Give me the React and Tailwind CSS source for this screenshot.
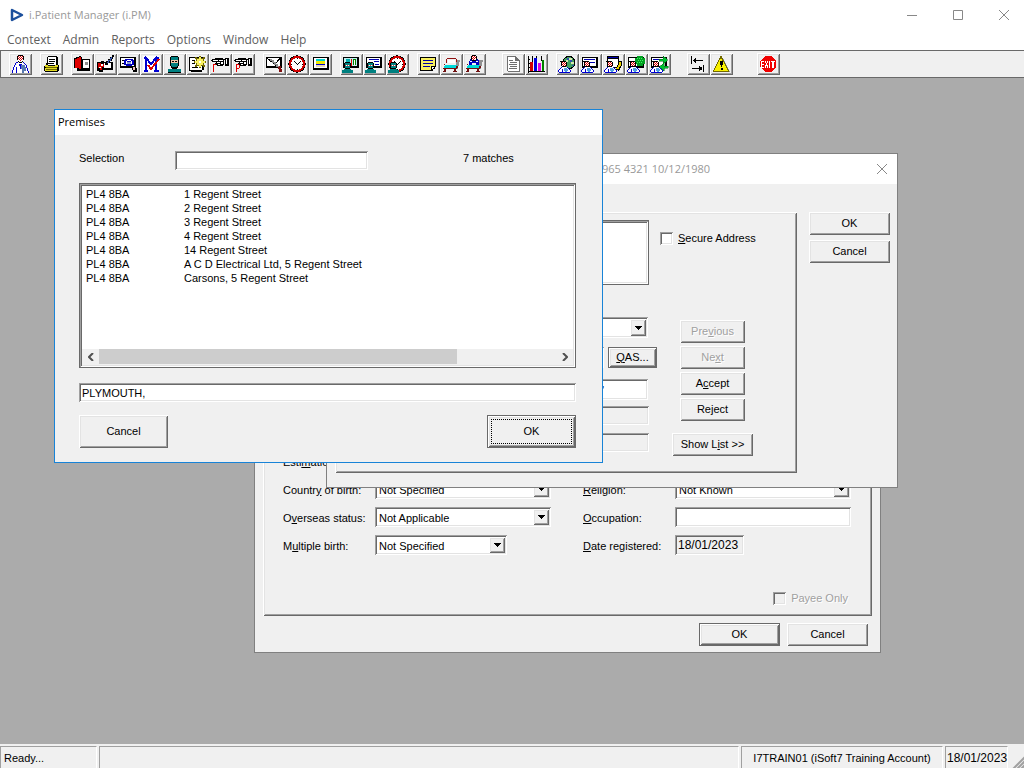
import React from 'react';
import clsx from 'clsx';

const RAISED = 'bg-[#f0f0f0] shadow-[inset_1px_1px_0_#fff,inset_-1px_-1px_0_#696969,inset_2px_2px_0_#e3e3e3,inset_-2px_-2px_0_#a0a0a0]';
const SUNKEN = 'shadow-[inset_1px_1px_0_#a0a0a0,inset_-1px_-1px_0_#fff,inset_2px_2px_0_#696969,inset_-2px_-2px_0_#e3e3e3]';
const UI_FONT = "font-['Liberation_Sans',Arial,sans-serif] text-[11px] leading-[14px]";
const TITLE_FONT = "font-['Open_Sans','Noto_Sans',sans-serif] text-[11px]";

const Nurse = () => (
  <>
    <path fill="#fff" d="M1 17v-2l3-3h5l3 3v2z" />
    <path fill="#0000d0" d="M0 15h1v2H0zM1 14h1v1H1zM2 13h1v1H2zM3 12h1v1H3zM9 12h1v1H9zM10 13h1v1h-1zM11 14h1v1h-1zM12 15h1v2h-1zM1 17h11v1H1zM4 14h1v3H4z" />
    <path fill="#50a0e0" d="M6 13h3v1h1v2H9v1H7v-1H6z" />
    <path fill="#000" d="M3 6h5v1h1v4H8v1H4v-1H3V7H2V6z" />
    <path fill="#fff" d="M4 7h4v4H4z" />
    <path fill="#e00000" d="M4 7h1v1H4zM6 7h1v1H6zM5 8h1v1H5zM7 8h1v1H7zM4 9h1v1H4zM6 9h1v1H6zM5 10h1v1H5zM7 10h1v1H7z" />
  </>
);

const Teal = () => (
  <>
    <path fill="#000" d="M3 7h5v1h1v5H8v1H3v-1H2V8h1z" />
    <path fill="#008080" d="M3 8h5v2H3zM3 11h5v2H3zM0 15h2v-1h7v1h2v3H0z" />
    <path fill="#c04040" d="M3 10h5v1H3z" />
    <path fill="#fff" d="M4 10h1v1H4zM6 10h1v1H6z" />
  </>
);

const Hand = () => (
  <>
    <path fill="#fff" d="M2 4h11v6H5V7H2z" />
    <path fill="#000" d="M4 3h8v1h2v1h-1v5h-1v1H6v-1H5V9H4V8h1V7H1V6H0V5h1V4h3zM14 3h4v8h-4z" />
    <path fill="#fff" d="M2 5h5v1H2zM8 5h4v1H8zM6 7h3v1H6zM10 7h2v2h-2zM7 9h2v1H7zM15 4h1v5h-1z" />
    <path fill="#e00000" d="M2 9h3v1H2zM2 10h1v7H2z" />
  </>
);

const Clock = () => (
  <>
    <circle cx="9" cy="9" r="7.500" fill="#fff" stroke="#000" strokeWidth="2.500" />
    <circle cx="9" cy="9" r="7" fill="none" stroke="#d00000" strokeWidth="2" />
    <path fill="#000" d="M9 3h1v1H9zM9 14h1v1H9zM3 9h1v1H3zM14 9h1v1h-1zM6 6h1v1H6zM7 7h1v1H7zM8 8h1v1H8zM9 9h1v1H9zM10 8h1v1h-1zM11 7h1v1h-1zM12 6h1v1h-1z" />
  </>
);

const Card = ({ fill = '#fff' }) => (
  <>
    <path fill="#000" d="M1 2h16v11H1z" />
    <path fill={fill} d="M2 3h13v8H2z" />
  </>
);

const Bed = () => (
  <>
    <path fill="#909090" d="M14 5h4v2h-1v4h-1v3h-2z" />
    <path fill="#00d8d8" d="M3 10h12v1h-1v2H2v-2h1z" />
    <path fill="#701010" d="M2 9h1v1H2zM1 13h14v1H1zM2 14h2v2H2zM12 14h2v2h-2zM14 11h2v2h-2zM1 16h3v1H1zM11 16h4v1h-4z" />
  </>
);

const ICONS = {
  Patient: (
    <>
      <path fill="#fff" d="M2 10h4V8h6v2h3l2 4v4H2z" />
      <path fill="#0000d0" d="M5 7h2v1H5zM4 8h1v2H4zM3 10h1v2H3zM2 12h1v3H2zM1 15h1v3H1zM5 12h1v6H5zM12 7h1v1h-1zM13 8h1v1h-1zM14 9h1v1h-1zM15 10h1v3h-1zM16 13h1v3h-1zM17 16h1v2h-1zM8 9h3v2H8zM9 11h2v3H9z" />
      <path fill="#5878b0" d="M10 10h4v2h1v4h-2v2h-2v-4h-1z" />
      <path fill="#000" d="M7 0h5v1H7zM6 1h1v4H6zM12 1h1v4h-1zM7 6h1v1H7zM11 6h1v1h-1zM8 7h3v1H8z" />
      <path fill="#fff" d="M7 1h5v5H7z" />
      <path fill="#d00000" d="M7 1h1v1H7zM9 1h1v1H9zM11 1h1v1h-1zM8 2h1v1H8zM10 2h1v1h-1zM7 3h1v1H7zM9 3h1v1H9zM11 3h1v1h-1zM8 4h1v1H8zM10 4h1v1h-1zM9 5h1v1H9z" />
    </>
  ),
  Open: (
    <>
      <path fill="#000" d="M6 1h9v1h1v8h1v6h-1v1H3v-1H2v-5h2V8h1V2h1z" />
      <path fill="#fff" d="M6 2h8v8H6z" />
      <path fill="#000" d="M7 4h6v1H7zM7 6h6v1H7zM6 8h6v1H6z" />
      <path fill="#e0d820" d="M3 10h3v1h7v-1h3v2h-1v4H3v-3h1v-1H3z" />
      <path fill="#706800" d="M4 12h11v1H4zM4 14h11v1H4z" />
    </>
  ),
  Register: (
    <>
      <path fill="#000" d="M9 4h8v12H4v-2h5z" />
      <path fill="#fff" d="M10 5h6v8h-6z" />
      <path fill="#909090" d="M12 7h3v3h-3z" />
      <path fill="#000" d="M1 3h2V2h3V1h2v1h1v13H7v-1H4v-1H1z" />
      <path fill="#e00000" d="M2 4h2V3h2V2h2v12H6v-1H2z" />
    </>
  ),
  'Edit record': (
    <>
      <path fill="#000" d="M1 7h4V6h3v1h9v8H7v2H3v-1H1z" />
      <path fill="#fff" d="M8 8h7v5H8z" />
      <path fill="#d00000" d="M2 8h3v1h3v3H6v3H4v-2H2z" />
      <path fill="#fff" d="M5 9h2v2H5zM3 12h2v1H3z" />
      <path fill="#000" d="M16 0h2v2h-1v2h-1v2h-2v2h-2v2H9v-2h1V6h2V4h2V2h2z" />
      <path fill="#3858b0" d="M15 2h1v2h-1v2h-2v2h-2V7h1V5h2V3h1z" />
    </>
  ),
  'Find record': (
    <>
      <Card />
      <path fill="#000" d="M3 5h3v1H3zM3 8h3v1H3zM13 11h4v2h1v4h-4v-2h-1z" />
      <path fill="#0000c0" d="M6 4h8v1h1v5h-2v1H7v-1H5V5h1z" />
      <path fill="#fff" d="M8 5h4v1H8zM7 6h1v3H7zM12 6h1v3h-1z" />
      <path fill="#90a0d0" d="M8 7h4v2H8z" />
      <path fill="#f0c0c0" d="M14 12h2v3h-2z" />
    </>
  ),
  Merge: (
    <>
      <path fill="#fff" d="M1 1h16v16H1z" />
      <path fill="none" stroke="#0000d0" strokeWidth="2" d="M4 16V3l5 6 5-6v13" />
      <path fill="#0000d0" d="M2 2h3v2H2zM13 2h4v2h-4zM2 15h4v2H2zM12 15h5v2h-5z" />
      <path fill="none" stroke="#e00000" strokeWidth="2" d="M6 10l3 4 8-10" />
    </>
  ),
  Clinician: (
    <>
      <path fill="#000" d="M6 1h7v1h1v9h-1v2H6v-2H5V2h1z" />
      <path fill="#008080" d="M6 2h7v3H6zM6 8h7v3h-1v1H7v-1H6zM3 14h4v-1h5v1h4v4H3z" />
      <path fill="#f0c8a8" d="M6 5h7v3H6z" />
      <path fill="#000" d="M7 6h2v1H7zM10 6h2v1h-2zM3 17h13v1H3zM7 13h5v1H7z" />
    </>
  ),
  'New note': (
    <>
      <path fill="#000" d="M1 2h15v13h-2v2H3v-1H1z" />
      <path fill="#fff" d="M2 3h12v12H2z" />
      <path fill="#000" d="M4 5h3v1H4zM4 8h3v1H4zM4 12h6v1H4z" />
      <path fill="#706800" d="M11 1h2v2h2V2h2v2h-1v2h2v2h-2v2h1v2h-2v-1h-2v2h-2v-2H9v1H7v-2h1V8H6V6h2V4H7V2h2v1h2z" />
      <path fill="#f8f060" d="M9 4h6v6H9zM11 2h2v10h-2zM7 6h10v2H7z" />
      <path fill="#fff" d="M11 6h2v2h-2z" />
    </>
  ),
  'Refer in': <Hand />,
  'Refer out': (
    <>
      <Hand />
      <path fill="#e00000" d="M5 10h1v3H5zM3 13h2v1H3z" />
    </>
  ),
  'Waiting list': (
    <>
      <Card />
      <path fill="none" stroke="#000" d="M2 3l12 10M16 2l-5 6" />
      <path fill="#909090" d="M5 4h2v1h2v2h2v2h2v2h2v2h-2v-1h-2v-2H9V8H7V6H5z" />
      <path fill="#801010" d="M14 11h2v3h1v3h-3v-3h-1z" />
    </>
  ),
  Appointments: <Clock />,
  Schedule: (
    <>
      <path fill="#000" d="M2 2h16v13H2z" />
      <path fill="#fff" d="M3 3h13v10H3z" />
      <path fill="#00d0d0" d="M5 4h9v2H5z" />
      <path fill="#f0e800" d="M5 6h9v3H5z" />
      <path fill="#0000d0" d="M5 9h9v1H5z" />
      <path fill="#e8d8b0" d="M5 10h9v2H5z" />
    </>
  ),
  'Clinic screen': (
    <>
      <Card fill="#c0f0f0" />
      <path fill="#00b0b0" d="M4 4h4v3H4z" />
      <path fill="#e00000" d="M9 4h1v7H9z" />
      <path fill="#008000" d="M11 4h3v6h-3z" />
      <path fill="#fff" d="M12 5h1v5h-1z" />
      <Teal />
    </>
  ),
  'Clinic list': (
    <>
      <Card />
      <path fill="#0000b0" d="M4 4h10v1H4zM9 6h5v1H9zM10 9h4v1h-4z" />
      <Teal />
    </>
  ),
  'Clinic clock': (
    <>
      <Clock />
      <Teal />
    </>
  ),
  Notes: (
    <>
      <path fill="#000" d="M1 2h16v10h-1v2h-2v2H1z" />
      <path fill="#f8f060" d="M2 3h14v8h-4v4H2z" />
      <path fill="#0000a0" d="M4 5h10v1H4zM4 8h10v1H4zM4 11h7v1H4z" />
      <path fill="#fff" d="M13 12h2v1h-1v1h-1z" />
    </>
  ),
  Bed: (
    <>
      <Bed />
      <path fill="#901010" d="M5 3h9v1h1v3h-1V4H5v4H4V4h1z" />
      <path fill="#fff" d="M6 5h7v3H6z" />
    </>
  ),
  'Bed transfer': (
    <>
      <Bed />
      <path fill="#0000c0" d="M5 4h8v1h1v5h-3V8H7v2H4V6h1z" />
      <path fill="#000" d="M7 0h4v1h1v4h-1v1H7V5H6V1h1z" />
      <path fill="#fff" d="M7 1h4v4H7zM5 6h2v1H5zM11 6h2v1h-2z" />
      <path fill="#e00000" d="M7 1h1v1H7zM9 1h1v1H9zM8 2h1v1H8zM10 2h1v1h-1zM7 3h1v1H7zM9 3h1v1H9zM8 4h1v1H8z" />
    </>
  ),
  Document: (
    <>
      <path fill="#707070" d="M3 1h9v1h1v1h1v1h1v1h1v12H4v-1H3z" />
      <path fill="#fff" d="M4 2h7v4h4v10H4z" />
      <path fill="#707070" d="M5 5h4v1H5zM6 7h7v1H6zM5 9h8v1H5zM6 11h7v1H6zM5 13h8v1H5zM12 3h1v2h-1z" />
    </>
  ),
  Chart: (
    <>
      <path fill="#000" d="M1 1h1v15h16v1H2v1H1zM5 1h1v15H5zM9 1h1v3H9zM14 1h1v5h-1zM2 4h1v1H2zM2 8h1v1H2zM2 12h1v1H2z" />
      <path fill="#d00000" d="M3 7h3v9H3z" />
      <path fill="#0000e0" d="M7 3h3v13H7z" />
      <path fill="#e000e0" d="M11 8h3v8h-3z" />
      <path fill="#008000" d="M15 5h2v11h-2z" />
    </>
  ),
  World: (
    <>
      <circle cx="11" cy="7.500" r="6" fill="#40a060" stroke="#000" />
      <path fill="#d8e8b0" d="M11 3h3v2h-3zM8 5h2v2H8zM13 7h3v2h-3z" />
      <path fill="#3050b0" d="M9 3h2v2H9zM12 5h2v2h-2zM14 10h2v1h-2z" />
      <Nurse />
    </>
  ),
  'Ward list': (
    <>
      <Card />
      <path fill="#0000b0" d="M3 4h11v1H3zM9 7h5v1H9z" />
      <Nurse />
    </>
  ),
  'Ward edit': (
    <>
      <path fill="#000" d="M3 1h12v12H3z" />
      <path fill="#fff" d="M4 4h10v8H4z" />
      <path fill="#0000b0" d="M4 2h10v1H4z" />
      <Nurse />
      <path fill="none" stroke="#000" strokeWidth="4" d="M16 6v4l-3 5" />
      <path fill="none" stroke="#e8d000" strokeWidth="2" d="M16 7v3l-3 4" />
    </>
  ),
  'Ward add': (
    <>
      <Card />
      <path fill="#00a020" d="M10 1h6v2h2v6h-2v2h-6V9H8V3h2z" />
      <path fill="#40f060" d="M10 3h1v1h-1zM12 3h1v1h-1zM14 3h1v1h-1zM11 5h1v1h-1zM13 5h1v1h-1zM15 5h1v1h-1zM10 7h1v1h-1zM12 7h1v1h-1zM14 7h1v1h-1z" />
      <Nurse />
    </>
  ),
  'Ward transfer': (
    <>
      <Card />
      <path fill="#0000b0" d="M3 4h6v1H3z" />
      <path fill="#00c030" stroke="#006010" strokeWidth=".5" d="M9 4h4V1l5 4-5 4V6H9zM18 13h-4v3l-5-4 5-4v3h4z" />
      <Nurse />
    </>
  ),
  Tab: (
    <path fill="#000" d="M2 1h1v8H2zM4 5h10v1H4zM5 4h2v3H5zM6 3h1v5H6zM14 10h1v7h-1zM3 13h9v1H3zM11 12h2v3h-2zM10 11h1v5h-1z" />
  ),
  Alert: (
    <>
      <path fill="#909090" d="M11 3l7 14H4z" />
      <path fill="#f8f000" stroke="#706800" d="M9 1.500L16.500 16H1.500z" />
      <path fill="#000" d="M8 6h3v4h-1v2H9v-2H8zM9 13h2v2H9z" />
    </>
  ),
  Exit: (
    <>
      <path fill="#f00000" d="M6 1h6l5 5v6l-5 5H6l-5-5V6z" />
      <path fill="#fff" d="M2 6h3v1H3v2h2v1H3v2h2v1H2zM6 6h1v2h1V6h1v2H8v2h1v3H8v-2H7v2H6v-3h1V8H6zM10 6h1v7h-1zM12 6h4v1h-1v6h-2V7h-1z" />
    </>
  ),
};

const TOOLBAR = [
  { names: ['Patient'], gap: 'ml-2' },
  { names: ['Open'], gap: 'ml-2' },
  { names: ['Register', 'Edit record', 'Find record', 'Merge', 'Clinician', 'New note', 'Refer in', 'Refer out'], gap: 'ml-2' },
  { names: ['Waiting list', 'Appointments', 'Schedule'], gap: 'ml-2' },
  { names: ['Clinic screen', 'Clinic list', 'Clinic clock'], gap: 'ml-2' },
  { names: ['Notes', 'Bed', 'Bed transfer'], gap: 'ml-2' },
  { names: ['Document', 'Chart'], gap: 'ml-4' },
  { names: ['World', 'Ward list', 'Ward edit', 'Ward add', 'Ward transfer'], gap: 'ml-2' },
  { names: ['Tab', 'Alert'], gap: 'ml-4' },
  { names: ['Exit'], gap: 'ml-6' },
];

const PREMISES = [
  ['PL4 8BA', '1 Regent Street'],
  ['PL4 8BA', '2 Regent Street'],
  ['PL4 8BA', '3 Regent Street'],
  ['PL4 8BA', '4 Regent Street'],
  ['PL4 8BA', '14 Regent Street'],
  ['PL4 8BA', 'A C D Electrical Ltd, 5 Regent Street'],
  ['PL4 8BA', 'Carsons, 5 Regent Street'],
];

// "&" marks the access key, as in the menus of the desktop toolkit
function Mnemonic({ text }) {
  const at = text.indexOf('&');
  if (at < 0) return text;
  return (
    <>
      {text.slice(0, at)}
      <u className="underline-offset-1">{text[at + 1]}</u>
      {text.slice(at + 2)}
    </>
  );
}

function Button({ text, isDefault, focused, disabled, className }) {
  return (
    <button
      type="button"
      disabled={disabled}
      className={clsx(
        'flex shrink-0',
        isDefault && 'bg-[#696969] p-px',
        disabled && 'text-[#a0a0a0] [text-shadow:1px_1px_0_#fff]',
        className
      )}
    >
      <span className={clsx('flex h-full w-full items-center justify-center p-[3px]', RAISED)}>
        <span className={clsx('flex items-center justify-center', focused && 'h-full w-full border border-dotted border-black')}>
          <span className="whitespace-nowrap pb-[2px]">
            <Mnemonic text={text} />
          </span>
        </span>
      </span>
    </button>
  );
}

function Combo({ id, value, label, className }) {
  return (
    <div className={clsx('relative', className)}>
      <select id={id} aria-label={label} className={clsx('h-full w-full appearance-none bg-white pl-1 pr-5 pt-px', SUNKEN)}>
        <option>{value}</option>
      </select>
      <span className={clsx('pointer-events-none absolute inset-y-[2px] right-[2px] flex w-4 items-center justify-center', RAISED)}>
        <svg width="7" height="4" viewBox="0 0 7 4" shapeRendering="crispEdges">
          <path d="M0 0h7v1H6v1H5v1H4v1H3V3H2V2H1V1H0z" />
        </svg>
      </span>
    </div>
  );
}

function Checkbox({ text, disabled, className }) {
  return (
    <label className={clsx('flex items-center gap-[5px]', disabled && 'text-[#a0a0a0] [text-shadow:1px_1px_0_#fff]', className)}>
      <input
        type="checkbox"
        disabled={disabled}
        className={clsx('h-[13px] w-[13px] appearance-none', disabled ? 'bg-[#f0f0f0]' : 'bg-white', SUNKEN)}
      />
      <span className="pb-px">
        <Mnemonic text={text} />
      </span>
    </label>
  );
}

function Field({ id, text, children }) {
  return (
    <div className="flex h-5 items-center">
      <label htmlFor={id} className="w-[92px] pt-[2px]">
        <Mnemonic text={text} />
      </label>
      {children}
    </div>
  );
}

function RegistrationWindow() {
  return (
    <section className="absolute left-[254px] top-[322px] w-[627px] border border-[#808080] bg-[#f0f0f0] pb-[6px]">
      <header className="h-[30px] bg-white" />
      <div className={clsx('mx-2 mt-2 px-5 pb-2 pt-3', RAISED)}>
        <div className="flex">
          <div className="flex w-[300px] flex-col gap-2">
            <Field id="estimation" text="Esti&mation:">
              <Combo id="estimation" value="" className="h-5 w-[176px]" />
            </Field>
            <Field id="country" text="Countr&y of birth:">
              <Combo id="country" value="Not Specified" className="h-5 w-[176px]" />
            </Field>
            <Field id="overseas" text="O&verseas status:">
              <Combo id="overseas" value="Not Applicable" className="h-5 w-[176px]" />
            </Field>
            <Field id="multiple" text="M&ultiple birth:">
              <Combo id="multiple" value="Not Specified" className="h-5 w-[132px]" />
            </Field>
          </div>
          <div className="flex flex-1 flex-col justify-end gap-2">
            <Field id="religion" text="&Religion:">
              <Combo id="religion" value="Not Known" className="h-5 w-[176px]" />
            </Field>
            <Field id="occupation" text="&Occupation:">
              <input id="occupation" className={clsx('h-5 w-[176px] bg-white px-1', SUNKEN)} />
            </Field>
            <Field id="registered" text="&Date registered:">
              <input id="registered" readOnly value="18/01/2023" className={clsx('h-5 w-[69px] px-[3px] text-xs', SUNKEN)} />
            </Field>
          </div>
        </div>
        <Checkbox text="Payee Only" disabled className="mt-[33px] h-5 justify-end pr-1" />
      </div>
      <footer className="mt-[7px] flex justify-end gap-[7px] pr-3">
        <Button text="OK" isDefault className="h-[23px] w-[81px]" />
        <Button text="Cancel" className="h-[23px] w-[81px]" />
      </footer>
    </section>
  );
}

function AddressWindow() {
  return (
    <section className="absolute left-[326px] top-[75px] w-[572px] border border-[#808080] bg-[#f0f0f0] pb-[14px]">
      <header className={clsx('flex h-[30px] items-center justify-between bg-white pl-[275px] pr-[9px] text-[#999]', TITLE_FONT)}>
        <h2>965 4321 10/12/1980</h2>
        <button type="button" aria-label="Close">
          <svg width="12" height="12" viewBox="0 0 12 12" fill="none" stroke="#888">
            <path d="M1 1l10 10M11 1L1 11" />
          </svg>
        </button>
      </header>
      <div className="flex items-start gap-3 pl-2 pr-[7px] pt-7">
        <div className={clsx('flex flex-1 pb-[17px] pl-2 pt-2', RAISED)}>
          <div className="flex w-[314px] flex-col">
            <textarea
              aria-label="Address"
              className={clsx('h-[65px] w-[306px] resize-none border border-[#696969] bg-white', SUNKEN)}
            />
            <Combo label="Address type" value="" className="mt-8 h-[21px] w-[305px]" />
            <div className="mt-[9px] flex h-[21px] gap-1">
              <input aria-label="Postcode" className={clsx('w-full bg-white', SUNKEN)} />
              <Button text="&QAS..." isDefault className="w-[49px]" />
            </div>
            <input aria-label="Street" defaultValue="'" className={clsx('mt-[11px] h-[21px] w-[305px] bg-white pl-[259px]', SUNKEN)} />
            <input aria-label="From" readOnly className={clsx('mt-[6px] h-[19px] w-[306px]', SUNKEN)} />
            <input aria-label="To" readOnly className={clsx('mt-2 h-[19px] w-[306px]', SUNKEN)} />
          </div>
          <div className="ml-[3px] flex w-[105px] flex-col items-center gap-[3px]">
            <Checkbox text="&Secure Address" className="mb-[72px] mt-3 h-[13px] self-start" />
            <Button text="Pre&vious" disabled className="h-[23px] w-[65px]" />
            <Button text="Ne&xt" disabled className="h-[23px] w-[65px]" />
            <Button text="A&ccept" className="h-[23px] w-[65px]" />
            <Button text="Re&ject" className="h-[23px] w-[65px]" />
            <Button text="Show L&ist >>" className="mt-[9px] h-[23px] w-[81px]" />
          </div>
        </div>
        <div className="flex flex-col gap-[5px]">
          <Button text="OK" className="h-[23px] w-[81px]" />
          <Button text="Cancel" className="h-[23px] w-[81px]" />
        </div>
      </div>
    </section>
  );
}

function ScrollArrow({ d, label }) {
  return (
    <button type="button" aria-label={label} className="flex w-[17px] items-center justify-center">
      <svg width="6" height="8" viewBox="0 0 6 8" fill="none" stroke="#505050" strokeWidth="2">
        <path d={d} />
      </svg>
    </button>
  );
}

function PremisesDialog() {
  return (
    <section className="absolute left-[54px] top-[31px] w-[549px] border border-[#1883d7] bg-[#f0f0f0]">
      <header className={clsx('flex h-[25px] items-center bg-white pb-[2px] pl-[3px]', TITLE_FONT)}>
        <h1>Premises</h1>
      </header>
      <div className="flex flex-col pb-[14px] pl-6 pr-[26px] pt-4">
        <div className="flex h-[19px]">
          <label htmlFor="selection" className="w-24">Selection</label>
          <input id="selection" className={clsx('w-[193px] bg-white px-[3px]', SUNKEN)} />
          <span className="ml-[95px]">7 matches</span>
        </div>
        <div className={clsx('mt-[13px] flex h-[185px] flex-col justify-between border border-[#696969] bg-white p-[2px]', SUNKEN)}>
          <table className="mt-px border-collapse text-left">
            <tbody>
              {PREMISES.map(([code, address]) => (
                <tr key={address}>
                  <td className="w-[102px] p-0 pl-1">{code}</td>
                  <td className="p-0">{address}</td>
                </tr>
              ))}
            </tbody>
          </table>
          <div className="flex h-[16px] bg-[#f0f0f0]">
            <ScrollArrow label="Scroll left" d="M5 0L1 4l4 4" />
            <div className="flex-1">
              <div className="h-[15px] w-[358px] bg-[#cdcdcd]" />
            </div>
            <ScrollArrow label="Scroll right" d="M1 0l4 4-4 4" />
          </div>
        </div>
        <input aria-label="Address" defaultValue="PLYMOUTH," className={clsx('mt-[15px] h-[19px] bg-white px-[3px]', SUNKEN)} />
        <div className="mt-[13px] flex h-[33px] justify-between">
          <Button text="Cancel" className="w-[89px]" />
          <Button text="OK" isDefault focused className="w-[89px]" />
        </div>
      </div>
    </section>
  );
}

function TitleBar() {
  return (
    <header className="flex h-[30px] items-center bg-white pl-[10px]">
      <svg width="14" height="14" viewBox="0 0 14 14" fill="none" stroke="#1c4f9c" strokeWidth="2.500" strokeLinejoin="round">
        <path d="M2 2l10 5-10 5z" />
      </svg>
      <h1 className="ml-[5px] flex-1 text-[#999]">i.Patient Manager (i.PM)</h1>
      <div className="flex gap-9 pr-[15px]">
        <button type="button" aria-label="Minimise">
          <svg width="10" height="10" stroke="#888"><path d="M0 5.500h10" /></svg>
        </button>
        <button type="button" aria-label="Maximise">
          <svg width="10" height="10" stroke="#888" fill="none"><path d="M.5.500h9v9h-9z" /></svg>
        </button>
        <button type="button" aria-label="Close">
          <svg width="10" height="10" stroke="#888"><path d="M0 0l10 10M10 0L0 10" /></svg>
        </button>
      </div>
    </header>
  );
}

export default function App() {
  return (
    <div className={clsx('flex h-screen flex-col overflow-hidden bg-[#ababab] text-black', UI_FONT)}>
      <div className={clsx('shrink-0 bg-white', TITLE_FONT)}>
        <TitleBar />
        <nav className="flex h-5 items-center gap-3 pl-[7px] text-xs text-[#606060]">
          {['Context', 'Admin', 'Reports', 'Options', 'Window', 'Help'].map((item) => (
            <button key={item} type="button">{item}</button>
          ))}
        </nav>
      </div>
      <div className="flex h-7 shrink-0 items-center border border-r-0 border-[#696969] bg-[#f0f0f0]">
        {TOOLBAR.map(({ names, gap }) => (
          <div key={names[0]} className={clsx('flex', gap)}>
            {names.map((name) => (
              <button key={name} type="button" aria-label={name} className={clsx('h-[22px] w-[23px] p-[2px]', RAISED)}>
                <svg width="19" height="18" viewBox="0 0 19 18" shapeRendering="crispEdges">
                  {ICONS[name]}
                </svg>
              </button>
            ))}
          </div>
        ))}
      </div>

      <main className="relative flex-1">
        <RegistrationWindow />
        <AddressWindow />
        <PremisesDialog />
      </main>

      <footer className="flex h-6 shrink-0 items-stretch gap-[2px] bg-[#f0f0f0] pt-[2px]">
        <span className="flex w-[97px] items-center border border-b-0 border-[#a0a0a0] border-r-white pl-[3px]">Ready...</span>
        <span className="flex-1 border border-b-0 border-[#a0a0a0] border-r-white" />
        <span className="flex w-[202px] items-center justify-center border border-b-0 border-[#a0a0a0] border-r-white">
          I7TRAIN01 (iSoft7 Training Account)
        </span>
        <span className="flex w-[63px] items-center border border-b-0 border-[#a0a0a0] border-r-white pl-px text-xs">18/01/2023</span>
        <svg width="14" height="22" viewBox="0 0 14 22" stroke="#a0a0a0" strokeWidth="2">
          <path d="M3 23L15 11M7 23l8-8M11 23l4-4" />
        </svg>
      </footer>
    </div>
  );
}
